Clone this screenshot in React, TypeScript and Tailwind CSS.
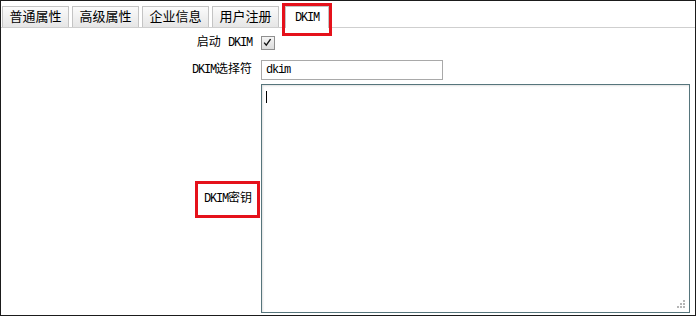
import React from "react";

const cjk = "font-['Liberation_Mono','Noto_Sans_CJK_SC',monospace]";

function Latin({ children }: { children: React.ReactNode }) {
  return <span className="font-['Liberation_Mono',monospace] tracking-[-1.2px]">{children}</span>;
}

function Tab({ children, active }: { children: React.ReactNode; active?: boolean }) {
  if (active) {
    return (
      <div className="relative ml-[3px] h-[22px] -mb-px flex items-center border border-b-0 border-[#c4c4c4] bg-white px-[9px] pt-[1px] text-[12px] text-black">
        <Latin>DKIM</Latin>
        <div className="pointer-events-none absolute -top-[4px] -left-[4px] -right-[4px] -bottom-[8px] border-[3px] border-[#e5111b]" />
      </div>
    );
  }
  return (
    <div className="flex h-[21px] w-[67px] items-center justify-center border border-b-0 border-[#c4c4c4] bg-gradient-to-b from-[#fbfbfb] to-[#e6e6e6] pt-[1px] text-[13px] text-black">
      {children}
    </div>
  );
}

export default function App() {
  return (
    <div className={`w-[696px] h-[316px] border border-[#1b1b1b] bg-white ${cjk} text-[12px] text-black flex flex-col`}>
      <div className="flex items-end gap-[3px] border-b border-[#cfcfcf] pl-[1px] pt-[5px]">
        <Tab>普通属性</Tab>
        <Tab>高级属性</Tab>
        <Tab>企业信息</Tab>
        <Tab>用户注册</Tab>
        <Tab active>DKIM</Tab>
      </div>
      <div className="grid grid-cols-[251px_1fr] gap-x-[9px] pt-[7px]">
        <div className="flex h-[14px] items-center justify-end mt-[1px]">
          <span>启动 <Latin>DKIM</Latin></span>
        </div>
        <div className="flex h-[14px] items-center mt-[1px]">
          <div className="relative h-[14px] w-[14px] border border-[#8f8f8f] bg-gradient-to-b from-[#f4f4f4] to-[#dcdcdc]">
            <svg viewBox="0 0 14 14" className="absolute left-0 top-0 h-[12px] w-[12px]">
              <path d="M2.5 6.5 L5 9.5 L10 2.5" fill="none" stroke="#111" strokeWidth="1.6" />
            </svg>
          </div>
        </div>

        <div className="mt-[10px] flex h-[20px] items-center justify-end">
          <span><Latin>DKIM</Latin>选择符</span>
        </div>
        <div className="mt-[10px] flex h-[20px] items-center">
          <div className="flex h-[20px] w-[182px] items-center border border-[#a9a9a9] bg-white px-[4px]">
            <Latin>dkim</Latin>
          </div>
        </div>

        <div className="mt-[4px] flex h-[229px] items-center justify-end">
          <span className="relative">
            <Latin>DKIM</Latin>密钥
            <span className="pointer-events-none absolute -left-[9px] -right-[8px] -top-[9px] -bottom-[10px] border-[3px] border-[#e5111b]" />
          </span>
        </div>
        <div className="mt-[4px]">
          <div className="relative h-[229px] w-[429px] border border-[#56757c] bg-white shadow-[inset_1px_1px_2px_rgba(0,0,0,0.12)]">
            <div className="absolute left-[4px] top-[6px] h-[12px] w-px bg-black" />
            <svg className="absolute right-[3px] bottom-[3px]" width="10" height="10" viewBox="0 0 10 10">
              <rect x="7" y="1" width="2" height="2" fill="#b5b5b5" />
              <rect x="4" y="4" width="2" height="2" fill="#b5b5b5" />
              <rect x="7" y="4" width="2" height="2" fill="#b5b5b5" />
              <rect x="1" y="7" width="2" height="2" fill="#b5b5b5" />
              <rect x="4" y="7" width="2" height="2" fill="#b5b5b5" />
              <rect x="7" y="7" width="2" height="2" fill="#b5b5b5" />
            </svg>
          </div>
        </div>
      </div>
    </div>
  );
}
